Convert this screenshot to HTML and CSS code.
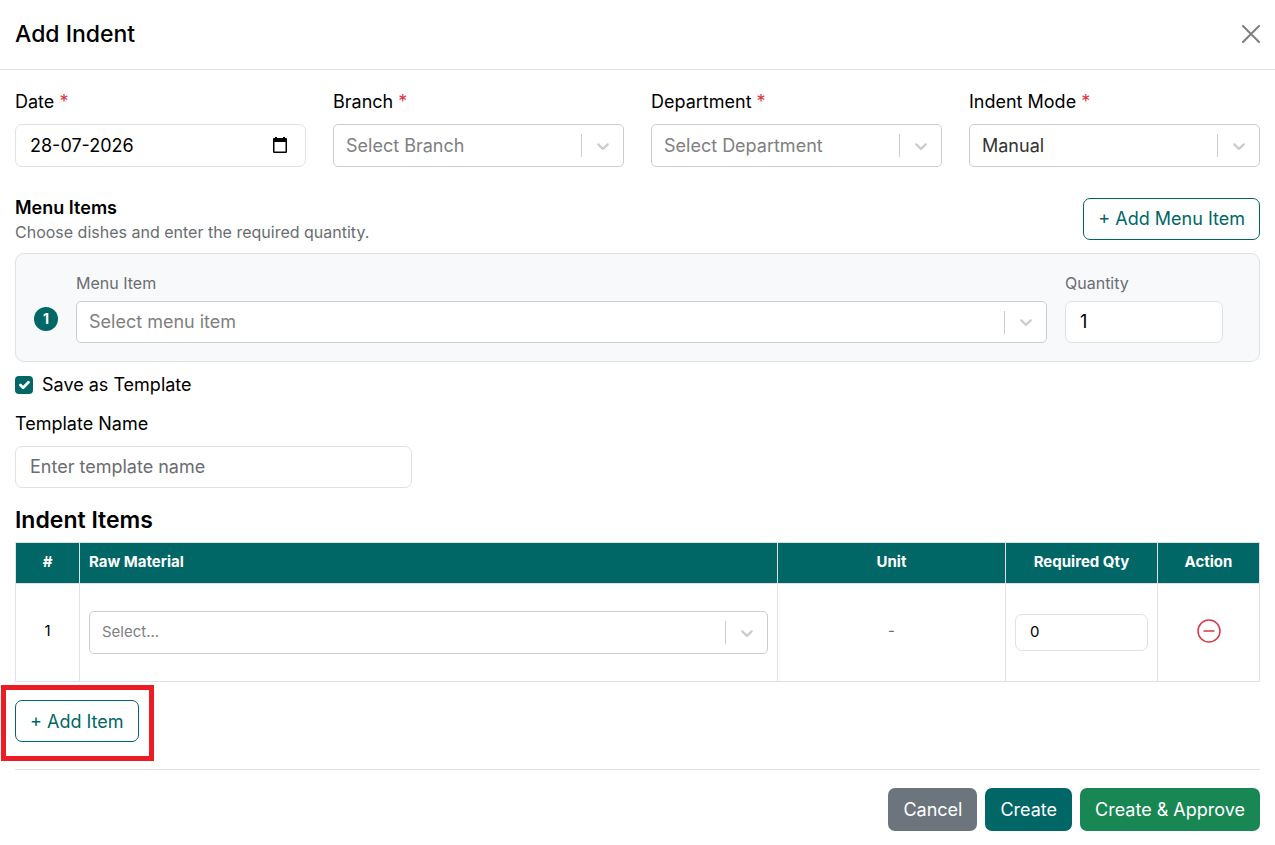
FILE: index.html
```html
<!DOCTYPE html>
<html lang="en">
<head>
  <meta charset="UTF-8">
  <meta name="viewport" content="width=device-width, initial-scale=1.0">
  <title>Add Indent</title>
  <link rel="stylesheet" href="styles.css">
</head>
<body>

<div class="modal">
  <div class="modal-header">
    <h1 class="modal-title">Add Indent</h1>
    <button type="button" class="btn-close" aria-label="Close">
      <svg width="18" height="18" viewBox="0 0 18 18"><path d="M1 1L17 17M17 1L1 17"/></svg>
    </button>
  </div>

  <form class="modal-body" id="indentForm">
    <div class="row-four">
      <div class="field">
        <label for="date">Date <span class="required">*</span></label>
        <div class="date-box">
          <input type="text" id="date" value="28-07-2026">
          <button type="button" class="date-btn" aria-label="Open calendar">
            <svg width="16" height="16" viewBox="0 0 16 16"><path fill-rule="evenodd" d="M3 0h2v1h6V0h2v1h1a1 1 0 0 1 1 1v13a1 1 0 0 1-1 1H2a1 1 0 0 1-1-1V2a1 1 0 0 1 1-1h1zM2.500 5v9.500h11V5z"/></svg>
          </button>
        </div>
      </div>
      <div class="field">
        <label for="branch">Branch <span class="required">*</span></label>
        <div class="select-box">
          <select id="branch" class="placeholder"><option>Select Branch</option></select>
          <span class="indicator"><svg width="20" height="20" viewBox="0 0 20 20"><path d="M4.516 7.548c0.436-0.446 1.043-0.481 1.576 0l3.908 3.747 3.908-3.747c0.533-0.481 1.141-0.446 1.574 0 0.436 0.445 0.408 1.197 0 1.615-0.406 0.418-4.695 4.502-4.695 4.502-0.217 0.223-0.502 0.335-0.787 0.335s-0.570-0.112-0.789-0.335c0 0-4.287-4.084-4.695-4.502s-0.436-1.170 0-1.615z"/></svg></span>
        </div>
      </div>
      <div class="field">
        <label for="department">Department <span class="required">*</span></label>
        <div class="select-box">
          <select id="department" class="placeholder"><option>Select Department</option></select>
          <span class="indicator"><svg width="20" height="20" viewBox="0 0 20 20"><path d="M4.516 7.548c0.436-0.446 1.043-0.481 1.576 0l3.908 3.747 3.908-3.747c0.533-0.481 1.141-0.446 1.574 0 0.436 0.445 0.408 1.197 0 1.615-0.406 0.418-4.695 4.502-4.695 4.502-0.217 0.223-0.502 0.335-0.787 0.335s-0.570-0.112-0.789-0.335c0 0-4.287-4.084-4.695-4.502s-0.436-1.170 0-1.615z"/></svg></span>
        </div>
      </div>
      <div class="field">
        <label for="mode">Indent Mode <span class="required">*</span></label>
        <div class="select-box">
          <select id="mode"><option>Manual</option></select>
          <span class="indicator"><svg width="20" height="20" viewBox="0 0 20 20"><path d="M4.516 7.548c0.436-0.446 1.043-0.481 1.576 0l3.908 3.747 3.908-3.747c0.533-0.481 1.141-0.446 1.574 0 0.436 0.445 0.408 1.197 0 1.615-0.406 0.418-4.695 4.502-4.695 4.502-0.217 0.223-0.502 0.335-0.787 0.335s-0.570-0.112-0.789-0.335c0 0-4.287-4.084-4.695-4.502s-0.436-1.170 0-1.615z"/></svg></span>
        </div>
      </div>
    </div>

    <div class="menu-head">
      <div>
        <h2 class="menu-title">Menu Items</h2>
        <p class="menu-hint">Choose dishes and enter the required quantity.</p>
      </div>
      <button type="button" class="btn btn-outline">+ Add Menu Item</button>
    </div>

    <div class="menu-row">
      <span class="badge">1</span>
      <div class="field menu-item">
        <label for="menuItem">Menu Item</label>
        <div class="select-box">
          <select id="menuItem" class="placeholder"><option>Select menu item</option></select>
          <span class="indicator"><svg width="20" height="20" viewBox="0 0 20 20"><path d="M4.516 7.548c0.436-0.446 1.043-0.481 1.576 0l3.908 3.747 3.908-3.747c0.533-0.481 1.141-0.446 1.574 0 0.436 0.445 0.408 1.197 0 1.615-0.406 0.418-4.695 4.502-4.695 4.502-0.217 0.223-0.502 0.335-0.787 0.335s-0.570-0.112-0.789-0.335c0 0-4.287-4.084-4.695-4.502s-0.436-1.170 0-1.615z"/></svg></span>
        </div>
      </div>
      <div class="field menu-qty">
        <label for="quantity">Quantity</label>
        <input type="text" inputmode="numeric" class="control" id="quantity" value="1">
      </div>
    </div>

    <div class="check-row">
      <input type="checkbox" id="saveTemplate" checked>
      <label for="saveTemplate">Save as Template</label>
    </div>

    <div class="row-three">
      <div class="field">
        <label for="templateName">Template Name</label>
        <input type="text" class="control" id="templateName" placeholder="Enter template name">
      </div>
    </div>

    <h2 class="items-title">Indent Items</h2>
    <table class="items-table">
      <thead>
        <tr>
          <th class="col-no">#</th>
          <th class="col-material">Raw Material</th>
          <th class="col-unit">Unit</th>
          <th class="col-qty">Required Qty</th>
          <th class="col-action">Action</th>
        </tr>
      </thead>
      <tbody>
        <tr>
          <td>1</td>
          <td class="input-cell">
            <div class="select-box">
              <select class="placeholder" aria-label="Raw Material"><option>Select...</option></select>
              <span class="indicator"><svg width="20" height="20" viewBox="0 0 20 20"><path d="M4.516 7.548c0.436-0.446 1.043-0.481 1.576 0l3.908 3.747 3.908-3.747c0.533-0.481 1.141-0.446 1.574 0 0.436 0.445 0.408 1.197 0 1.615-0.406 0.418-4.695 4.502-4.695 4.502-0.217 0.223-0.502 0.335-0.787 0.335s-0.570-0.112-0.789-0.335c0 0-4.287-4.084-4.695-4.502s-0.436-1.170 0-1.615z"/></svg></span>
            </div>
          </td>
          <td class="unit-cell">-</td>
          <td class="input-cell"><input type="text" inputmode="numeric" class="control control-sm" aria-label="Required Qty" value="0"></td>
          <td>
            <button type="button" class="btn-remove" aria-label="Remove item">
              <svg width="24" height="24" viewBox="0 0 24 24"><circle cx="12" cy="12" r="11"/><path d="M6.500 12h11"/></svg>
            </button>
          </td>
        </tr>
      </tbody>
    </table>

    <div class="add-item">
      <button type="button" class="btn btn-outline">+ Add Item</button>
    </div>

    <div class="modal-footer">
      <button type="button" class="btn btn-cancel">Cancel</button>
      <button type="submit" class="btn btn-create">Create</button>
      <button type="submit" class="btn btn-approve">Create &amp; Approve</button>
    </div>
  </form>
</div>

</body>
</html>
```
FILE: styles.css
```css
* {
  box-sizing: border-box;
}
body {
  font-family: Inter, "Liberation Sans", sans-serif;
  font-size: 18px;
  line-height: 27px;
  margin: 0;
  color: #000;
  background-color: #fff;
}
h1, h2, p {
  margin: 0;
}
input, select, button {
  font: inherit;
  color: inherit;
}
svg {
  display: block;
}
.modal-header {
  display: flex;
  align-items: center;
  justify-content: space-between;
  height: 70px;
  padding: 0 15px;
  border-bottom: 1px solid #dee2e6;
}
.modal-title {
  font-size: 23px;
  font-weight: 500;
}
.btn-close {
  padding: 0 0 1px;
  border: none;
  background: none;
  cursor: pointer;
}
.btn-close svg {
  stroke: #7f7f7f;
  stroke-width: 2;
  stroke-linecap: round;
}
.modal-body {
  padding: 18px 15px;
}
.row-four {
  display: grid;
  grid-template-columns: repeat(4, minmax(0, 1fr));
  gap: 27px;
}
.row-three {
  display: grid;
  grid-template-columns: repeat(3, minmax(0, 1fr));
  gap: 27px;
  margin-top: 12px;
}
.field label {
  display: block;
  margin-bottom: 9px;
}
.required {
  color: #dc3545;
}
.control {
  display: block;
  width: 100%;
  height: 42px;
  padding: 0 14px 1px;
  border: 1px solid #dee2e6;
  border-radius: 7px;
  background-color: #fff;
}
.control::placeholder {
  color: #6a6d71;
  opacity: 1;
}
.control-sm {
  height: 37px;
  padding-bottom: 3px;
}
.date-box {
  display: flex;
  align-items: center;
  height: 43px;
  padding: 0 17px 0 14px;
  border: 1px solid #dee2e6;
  border-radius: 7px;
}
.date-box input {
  flex: 1;
  min-width: 0;
  padding: 0;
  border: none;
  background: none;
}
.date-btn {
  padding: 0 0 1px;
  border: none;
  background: none;
}
/* arrow and divider share the grid cell of the select */
.select-box {
  display: grid;
  height: 43px;
}
.select-box select {
  grid-area: 1 / 1;
  width: 100%;
  padding: 0 50px 0 12px;
  border: 1px solid #ccc;
  border-radius: 5px;
  background-color: #fff;
  color: #333;
  appearance: none;
}
.select-box select.placeholder {
  color: #808080;
}
.indicator {
  grid-area: 1 / 1;
  justify-self: end;
  align-self: center;
  display: flex;
  align-items: center;
  height: 23px;
  padding: 0 11px;
  border-left: 1px solid #ccc;
  pointer-events: none;
}
.indicator svg {
  fill: #ccc;
}
.menu-head {
  display: flex;
  align-items: center;
  justify-content: space-between;
  margin: 27px 0 10px;
}
.menu-title {
  font-size: 18px;
  font-weight: 600;
}
.menu-hint {
  font-size: 16px;
  line-height: 22px;
  color: #6a6d71;
}
.menu-row {
  display: flex;
  align-items: flex-end;
  gap: 18px;
  padding: 18px 36px 18px 18px;
  border: 1px solid #dee2e6;
  border-radius: 9px;
  background-color: #f8f9fb;
}
.menu-row label {
  margin-bottom: 7px;
  font-size: 16px;
  line-height: 22px;
  color: #6a6d71;
}
.menu-row .select-box {
  height: 42px;
}
.menu-row select {
  padding-bottom: 1px;
}
.menu-item {
  flex: 1;
}
.menu-qty {
  width: 158px;
}
.badge {
  width: 24px;
  margin-bottom: 12px;
  border-radius: 50%;
  background-color: #006666;
  color: #fff;
  font-size: 14px;
  font-weight: 700;
  line-height: 24px;
  text-align: center;
}
.check-row {
  display: flex;
  align-items: center;
  gap: 9px;
  margin-top: 9px;
}
.check-row input {
  width: 18px;
  height: 18px;
  margin: 0;
  border-radius: 4px;
  background: #006666 url("data:image/svg+xml,%3Csvg xmlns='http://www.w3.org/2000/svg' viewBox='0 0 20 20'%3E%3Cpath fill='none' stroke='%23fff' stroke-linecap='round' stroke-linejoin='round' stroke-width='3' d='m6 10 3 3 6-6'/%3E%3C/svg%3E") center / contain no-repeat;
  appearance: none;
}
.items-title {
  margin: 19px 0 8px;
  font-size: 23px;
  font-weight: 600;
}
.items-table {
  width: 100%;
  border-collapse: collapse;
  table-layout: fixed;
  font-size: 15px;
  text-align: center;
}
.items-table th,
.items-table td {
  padding: 0 9px 4px;
  border: 1px solid #dee2e6;
}
.items-table th {
  height: 41px;
  background-color: #006666;
  color: #fff;
  font-weight: 700;
}
.items-table td {
  height: 98px;
}
.items-table .input-cell {
  padding-bottom: 0;
}
.input-cell select {
  padding-bottom: 3px;
}
.unit-cell {
  color: #6a6d71;
}
.col-no {
  width: 64px;
}
.items-table .col-material {
  text-align: left;
}
.col-unit {
  width: 228px;
}
.col-qty {
  width: 152px;
}
.col-action {
  width: 102px;
}
.btn-remove {
  display: block;
  margin: 0 auto;
  padding: 0;
  border: none;
  background: none;
  cursor: pointer;
}
.btn-remove svg {
  fill: none;
  stroke: #dc3545;
  stroke-width: 1.5;
}
.btn {
  height: 43px;
  padding: 0 14px;
  border: 1px solid transparent;
  border-radius: 7px;
  color: #fff;
  cursor: pointer;
}
.btn-outline {
  height: 42px;
  border-color: #006666;
  background-color: #fff;
  color: #006666;
}
.btn-cancel {
  background-color: #6c757d;
}
.btn-create {
  background-color: #006666;
}
.btn-approve {
  background-color: #198754;
}
.add-item {
  position: relative;
  display: flex;
  width: fit-content;
  margin: 18px 0 27px;
}
/* red frame around the add button */
.add-item::after {
  content: "";
  position: absolute;
  inset: -15px -15px -19px -14px;
  border: 5px solid #ed1c24;
  pointer-events: none;
}
.modal-footer {
  display: flex;
  justify-content: flex-end;
  gap: 8px;
  padding-top: 18px;
  border-top: 1px solid #dee2e6;
}
```
